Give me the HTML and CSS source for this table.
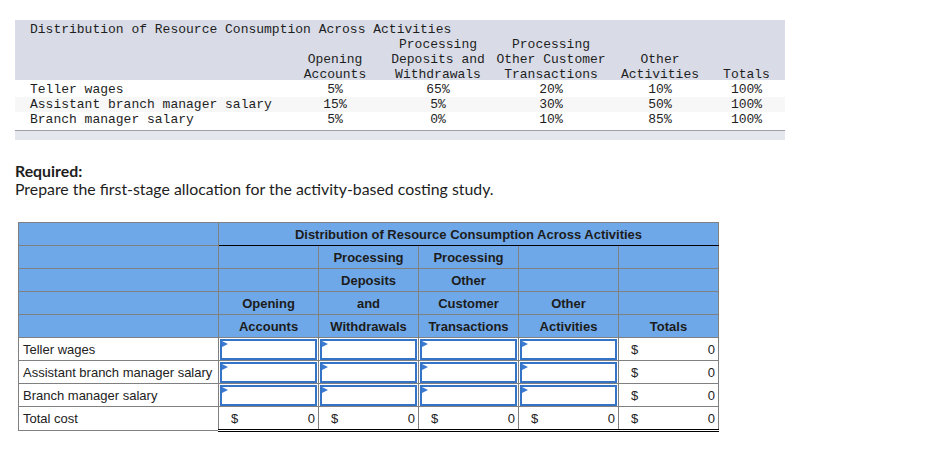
FILE: index.html
```html
<!DOCTYPE html>
<html>
<head>
<meta charset="utf-8">
<link rel="stylesheet" href="styles.css">
</head>
<body>
<div class="page">
  <div class="src">
    <div class="src-head">
      <div class="src-title">Distribution of Resource Consumption Across Activities</div>
      <div class="src-row">
        <div class="c c0"></div>
        <div class="c c1"><span>Opening</span><span>Accounts</span></div>
        <div class="c c2"><span>Processing</span><span>Deposits and</span><span>Withdrawals</span></div>
        <div class="c c3"><span>Processing</span><span>Other Customer</span><span>Transactions</span></div>
        <div class="c c4"><span>Other</span><span>Activities</span></div>
        <div class="c c5"><span>Totals</span></div>
      </div>
    </div>
    <div class="src-body">
      <div class="src-row">
        <div class="c c0">Teller wages</div>
        <div class="c c1">5%</div>
        <div class="c c2">65%</div>
        <div class="c c3">20%</div>
        <div class="c c4">10%</div>
        <div class="c c5">100%</div>
      </div>
      <div class="src-row alt">
        <div class="c c0">Assistant branch manager salary</div>
        <div class="c c1">15%</div>
        <div class="c c2">5%</div>
        <div class="c c3">30%</div>
        <div class="c c4">50%</div>
        <div class="c c5">100%</div>
      </div>
      <div class="src-row">
        <div class="c c0">Branch manager salary</div>
        <div class="c c1">5%</div>
        <div class="c c2">0%</div>
        <div class="c c3">10%</div>
        <div class="c c4">85%</div>
        <div class="c c5">100%</div>
      </div>
    </div>
    <div class="src-foot"></div>
  </div>

  <div class="req">
    <div class="req-title">Required:</div>
    <div class="req-text">Prepare the first-stage allocation for the activity-based costing study.</div>
  </div>

  <table class="alloc">
    <colgroup>
      <col class="col-label">
      <col class="col-num"><col class="col-num"><col class="col-num"><col class="col-num"><col class="col-num">
    </colgroup>
    <thead>
      <tr>
        <th></th>
        <th colspan="5" class="span-head">Distribution of Resource Consumption Across Activities</th>
      </tr>
      <tr><th></th><th></th><th>Processing</th><th>Processing</th><th></th><th></th></tr>
      <tr><th></th><th></th><th>Deposits</th><th>Other</th><th></th><th></th></tr>
      <tr><th></th><th>Opening</th><th>and</th><th>Customer</th><th>Other</th><th></th></tr>
      <tr><th></th><th>Accounts</th><th>Withdrawals</th><th>Transactions</th><th>Activities</th><th>Totals</th></tr>
    </thead>
    <tbody>
      <tr>
        <td class="label">Teller wages</td>
        <td class="in"><div class="input"></div></td>
        <td class="in"><div class="input"></div></td>
        <td class="in"><div class="input"></div></td>
        <td class="in"><div class="input"></div></td>
        <td class="money"><div class="amt"><span>$</span><span>0</span></div></td>
      </tr>
      <tr>
        <td class="label">Assistant branch manager salary</td>
        <td class="in"><div class="input"></div></td>
        <td class="in"><div class="input"></div></td>
        <td class="in"><div class="input"></div></td>
        <td class="in"><div class="input"></div></td>
        <td class="money"><div class="amt"><span>$</span><span>0</span></div></td>
      </tr>
      <tr>
        <td class="label">Branch manager salary</td>
        <td class="in"><div class="input"></div></td>
        <td class="in"><div class="input"></div></td>
        <td class="in"><div class="input"></div></td>
        <td class="in"><div class="input"></div></td>
        <td class="money"><div class="amt"><span>$</span><span>0</span></div></td>
      </tr>
      <tr class="total">
        <td class="label">Total cost</td>
        <td class="money"><div class="amt"><span>$</span><span>0</span></div></td>
        <td class="money"><div class="amt"><span>$</span><span>0</span></div></td>
        <td class="money"><div class="amt"><span>$</span><span>0</span></div></td>
        <td class="money"><div class="amt"><span>$</span><span>0</span></div></td>
        <td class="money"><div class="amt"><span>$</span><span>0</span></div></td>
      </tr>
    </tbody>
  </table>
</div>
</body>
</html>
```

FILE: styles.css
```css
html, body {
  margin: 0;
  padding: 0;
  background: #fff;
}

.page {
  padding: 20px 0 0 15px;
}

/* source exhibit */
.src {
  width: 770px;
  font-family: "Liberation Mono", "DejaVu Sans Mono", monospace;
  font-size: 13px;
  line-height: 15px;
  color: #1e1e1e;
}

.src-head {
  background: #d9dce7;
  height: 58px;
  padding-top: 2px;
}

.src-title {
  padding-left: 15px;
  white-space: pre;
}

.src-row {
  display: flex;
}

.src-row.alt {
  background: #f7f7f8;
}

.c {
  display: flex;
  flex-direction: column;
  align-items: center;
  justify-content: flex-end;
  white-space: pre;
  flex: none;
}

.c0 { width: 285px; padding-left: 15px; box-sizing: border-box; align-items: flex-start; }
.c1 { width: 70px; }
.c2 { width: 136px; }
.c3 { width: 90px; }
.c4 { width: 128px; }
.c5 { width: 45px; }

.src-body {
  padding-top: 2px;
  padding-bottom: 3px;
}

.src-foot {
  border-top: 1px solid #a0a0a4;
  height: 9px;
  background: #e5e7ee;
}

/* required */
.req {
  margin-top: 22px;
  font-family: Lato, "Open Sans", sans-serif;
  font-size: 15.85px;
  line-height: 18px;
  color: #1d1d1d;
}

.req-title {
  font-weight: bold;
}

/* allocation table */
.alloc {
  margin: 24px 0 0 3px;
  border-collapse: collapse;
  table-layout: fixed;
  width: 700px;
  font-family: "Liberation Sans", Arial, sans-serif;
  font-size: 13px;
  color: #222;
}

.col-label { width: 200px; }
.col-num { width: 100px; }

.alloc th,
.alloc td {
  border: 1px solid #808080;
  height: 22px;
  padding: 0;
  white-space: nowrap;
}

.alloc th {
  background: #6fa8e8;
  font-weight: bold;
  text-align: center;
  color: #1c1c1c;
}

.alloc th.span-head {
  border-bottom: 1px solid #000;
}

.alloc td.label {
  padding-left: 4px;
  text-align: left;
}

.alloc td.in {
  vertical-align: top;
}

.input {
  position: relative;
  box-sizing: border-box;
  height: 21px;
  margin: 1px 1px 0 1px;
  border: 2px solid #3573c6;
  background: #fff;
}

.input::before {
  content: "";
  position: absolute;
  left: 0;
  top: 0;
  border-left: 6px solid #3a7ad2;
  border-top: 3px solid transparent;
  border-bottom: 3px solid transparent;
}

.amt {
  display: flex;
  justify-content: space-between;
  padding: 0 3px 0 12px;
}

.alloc tr.total td.money {
  border-top: 1px solid #000;
  border-bottom: 3px double #000;
}
```
